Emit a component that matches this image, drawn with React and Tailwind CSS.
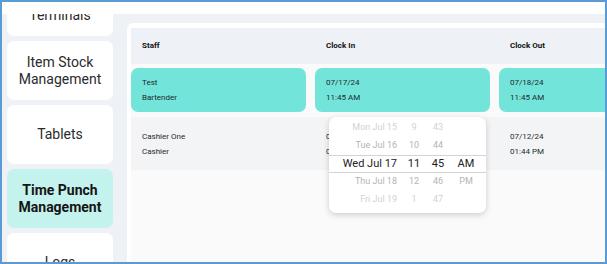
import React from "react";

const navItems = [
  { label: ["Payment", "Terminals"] },
  { label: ["Item Stock", "Management"] },
  { label: ["Tablets"] },
  { label: ["Time Punch", "Management"], active: true },
  { label: ["Logs"] },
];

const pickerRows = [
  { date: "Mon Jul 15", h: "9", m: "43", ap: "", tone: "far" },
  { date: "Tue Jul 16", h: "10", m: "44", ap: "", tone: "near" },
  { date: "Wed Jul 17", h: "11", m: "45", ap: "AM", tone: "sel" },
  { date: "Thu Jul 18", h: "12", m: "46", ap: "PM", tone: "near" },
  { date: "Fri Jul 19", h: "1", m: "47", ap: "", tone: "far" },
];

function toneClass(tone) {
  if (tone === "sel") return "text-[11px] text-[#222222] border-y border-[#d4d4d4]";
  if (tone === "near") return "text-[9px] text-[#b4b4b4]";
  return "text-[9px] text-[#d2d2d2]";
}

function Picker() {
  return (
    <div className="absolute left-[198px] top-[89px] w-[157px] h-[96px] bg-white rounded-[7px] shadow-[0_2px_6px_rgba(0,0,0,0.18)] py-[2px] flex flex-col">
      {pickerRows.map((r) => (
        <div key={r.date} className={"flex items-center h-[18px] shrink-0 " + toneClass(r.tone)}>
          <div className="w-[68px] text-right">{r.date}</div>
          <div className="w-[24px] ml-[5px] text-center">{r.h}</div>
          <div className="w-[24px] text-center">{r.m}</div>
          <div className="w-[28px] ml-[2px] text-center">{r.ap}</div>
        </div>
      ))}
    </div>
  );
}

function Cell({ lines, teal }) {
  return (
    <div
      className={
        "w-[175px] shrink-0 h-full flex flex-col justify-center pl-[11px] text-[8px] leading-[15px] text-[#1d2b2a] " +
        (teal ? "bg-[#72e4da] rounded-[7px]" : "")
      }
    >
      {lines.map((l) => (
        <div key={l}>{l}</div>
      ))}
    </div>
  );
}

export default function App() {
  return (
    <div
      className="w-[607px] h-[264px] border-2 border-[#5b9bd5] bg-[#eef2f6] flex flex-col overflow-hidden"
      style={{ fontFamily: "Roboto, 'Noto Sans', sans-serif" }}
    >
      <div className="h-[12px] bg-white shrink-0" />
      <div className="flex flex-1 min-h-0">
        <aside className="w-[118px] shrink-0 overflow-hidden pl-[5px]">
          <div className="flex flex-col gap-[5px] -mt-[37px]">
            {navItems.map((n) => (
              <div
                key={n.label.join(" ")}
                className={
                  "w-[106px] h-[59px] shrink-0 rounded-[7px] flex flex-col items-center justify-center text-center text-[14px] leading-[17px] " +
                  (n.active ? "bg-[#c4f3ee] font-bold text-[#151515]" : "bg-white text-[#2b2b2b]")
                }
              >
                {n.label.map((l) => (
                  <div key={l}>{l}</div>
                ))}
              </div>
            ))}
          </div>
        </aside>
        <main className="flex-1 min-w-0 overflow-hidden pl-[7px] pt-[9px]">
          <div className="w-[700px] h-full bg-white rounded-tl-[6px] pl-[4px] pt-[5px]">
            <div className="relative h-full bg-[#fafafa] flex flex-col">
              <div className="h-[36px] shrink-0 bg-[#eef1f6] flex items-center gap-[9px] text-[8px] font-bold text-[#111]">
                <div className="w-[175px] pl-[11px]">Staff</div>
                <div className="w-[175px] pl-[11px]">Clock In</div>
                <div className="w-[175px] pl-[11px]">Clock Out</div>
              </div>
              <div className="h-[44px] mt-[4px] shrink-0 flex gap-[9px]">
                <Cell teal lines={["Test", "Bartender"]} />
                <Cell teal lines={["07/17/24", "11:45 AM"]} />
                <Cell teal lines={["07/18/24", "11:45 AM"]} />
              </div>
              <div className="h-[53px] mt-[5px] shrink-0 bg-[#f3f4f5] flex gap-[9px]">
                <Cell lines={["Cashier One", "Cashier"]} />
                <Cell lines={["07/12/24", "09:02 AM"]} />
                <Cell lines={["07/12/24", "01:44 PM"]} />
              </div>
              <Picker />
            </div>
          </div>
        </main>
      </div>
    </div>
  );
}
